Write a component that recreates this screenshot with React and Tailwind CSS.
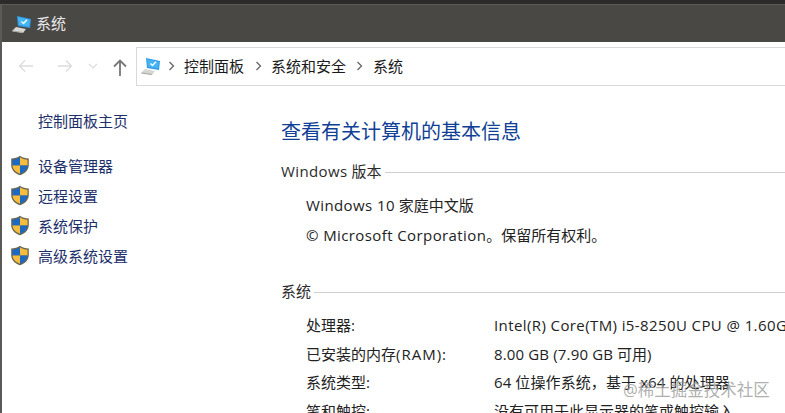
const font = "font-['Open_Sans','Noto_Sans_CJK_SC',sans-serif]";

const Shield = () => (
  <svg width="20" height="21" viewBox="0 0 20 21" className="shrink-0">
    <path d="M10 .8 C7.500 2.600 4.500 3.400 1.200 3.500 V10 C1.200 14.800 4.500 18.200 10 20.300 C15.500 18.200 18.800 14.800 18.800 10 V3.500 C15.500 3.400 12.500 2.600 10 .8 Z" fill="#6b6650" />
    <path d="M10 2.300 C7.800 3.800 5.300 4.500 2.500 4.700 V10.500 H10 Z" fill="#1c69c4" />
    <path d="M10 2.300 C12.200 3.800 14.700 4.500 17.500 4.700 V10.500 H10 Z" fill="#f6bd3d" />
    <path d="M2.500 10.500 H10 V18.800 C5.500 17 2.800 14.300 2.500 10.500 Z" fill="#f6bd3d" />
    <path d="M17.500 10.500 H10 V18.800 C14.500 17 17.200 14.300 17.500 10.500 Z" fill="#1c69c4" />
  </svg>
);

const Computer = () => (
  <svg width="20" height="18" viewBox="0 0 20 18" className="shrink-0">
    <path d="M5 1 L19 4 L18 13 L6 11 Z" fill="#2f9be8" />
    <path d="M6 2.200 L17.800 4.800 L17 11.500 L7 9.800 Z" fill="#45b4f2" />
    <path d="M9.500 6.500 L11.500 8.500 L15 4.800" fill="none" stroke="#ffffff" strokeWidth="1.300" />
    <path d="M4 12 L14 14 L11 18 L0 16 Z" fill="#d6d6d2" />
    <path d="M1 15.500 L11 17 L10.500 18 L0 16.500 Z" fill="#a9a9a5" />
  </svg>
);

const NavArrow = ({ flip, color }) => (
  <svg width="16" height="16" viewBox="0 0 16 16" className={flip ? "rotate-180" : ""}>
    <path d="M15 8 H1.500 M7 2.500 L1.500 8 L7 13.500" fill="none" stroke={color} strokeWidth="1.300" />
  </svg>
);

const UpArrow = () => (
  <svg width="14" height="17" viewBox="0 0 14 17">
    <path d="M7 17 V1.500 M1 7.500 L7 1.500 L13 7.500" fill="none" stroke="#777777" strokeWidth="1.800" />
  </svg>
);

const Chevron = () => (
  <svg width="7" height="10" viewBox="0 0 7 10" className="shrink-0">
    <path d="M1.500 1 L5.500 5 L1.500 9" fill="none" stroke="#666666" strokeWidth="1.300" />
  </svg>
);

// Latin runs are a little wider in the original UI font
const Lat = ({ children }) => <span className="tracking-[0.4px]">{children}</span>;

const SectionHead = ({ title, className }) => (
  <div className={`flex items-center gap-[3px] text-[15px] text-[#2b2b2b] leading-5 ${className}`}>
    <span>{title}</span>
    <div className="flex-1 h-px bg-[#cfcfcf] mt-0.5" />
  </div>
);

const sideLinks = ["设备管理器", "远程设置", "系统保护", "高级系统设置"];

const specs = [
  ["处理器:", <Lat>Intel(R) Core(TM) i5-8250U CPU @ 1.60GHz   1.80 GHz</Lat>, "h-[29px]"],
  [<>已安装的内存<span className="tracking-[1px]">(RAM):</span></>, <><span className="tracking-[0.15px]">8.00 GB (7.90 GB</span> 可用)</>, "h-[28px]"],
  ["系统类型:", <span className="tracking-[0.1px]">64 位操作系统，基于 x64 的处理器</span>, "h-[29px]"],
  ["笔和触控:", "没有可用于此显示器的笔或触控输入", "h-[28px]"],
];

export default function App() {
  return (
    <div className={`relative w-[785px] h-[413px] overflow-hidden bg-[#2c2b2a] pt-1 flex flex-col ${font}`}>
      <div className="flex-1 flex flex-col border-l-2 border-t border-[#5c5a57] min-h-0">
        <div className="h-[37px] bg-[#4a4845] flex items-center pl-[10px] gap-[4px] shrink-0">
          <Computer />
          <span className="text-[15px] text-[#e8e8e8]">系统</span>
        </div>

        <div className="flex-1 bg-white min-h-0 flex flex-col">
          <div className="h-[48px] flex items-center shrink-0">
            <div className="flex items-center w-[134px] pl-[16px]">
              <NavArrow color="#dcdcdc" />
              <div className="ml-[23px]"><NavArrow color="#dcdcdc" flip /></div>
              <svg width="10" height="6" viewBox="0 0 10 6" className="ml-[15px]">
                <path d="M1 1 L5 5 L9 1" fill="none" stroke="#dcdcdc" strokeWidth="1.200" />
              </svg>
              <div className="ml-[15px] mt-[3px]"><UpArrow /></div>
            </div>
            <div className="flex-1 h-[39px] border border-r-0 border-[#d9d9d9] flex items-center pl-[4px] text-[15px] text-[#1a1a1a]">
              <Computer />
              <div className="ml-[7px]"><Chevron /></div>
              <span className="ml-[9px]">控制面板</span>
              <div className="ml-[11px]"><Chevron /></div>
              <span className="ml-[9px]">系统和安全</span>
              <div className="ml-[10px]"><Chevron /></div>
              <span className="ml-[10px]">系统</span>
            </div>
          </div>

          <div className="flex-1 flex min-h-0">
            <div className="w-[279px] shrink-0 pt-[21px] text-[15px] leading-5 text-[#1c2f6b]">
              <div className="pl-[36px]">控制面板主页</div>
              <div className="mt-[24px] flex flex-col gap-[9px] pl-[8px]">
                {sideLinks.map((label) => (
                  <div key={label} className="flex items-center gap-2">
                    <Shield />
                    <span>{label}</span>
                  </div>
                ))}
              </div>
            </div>

            <div className="flex-1 min-w-0 pt-[28px]">
              <div className="text-[20px] leading-7 text-[#0f3f96]">查看有关计算机的基本信息</div>
              <SectionHead title={<><Lat>Windows</Lat> 版本</>} className="mt-[15px]" />
              <div className="pl-[25px] pt-[14px] text-[15px] leading-5 text-[#222222] flex flex-col gap-[10px]">
                <div><Lat>Windows 10</Lat> 家庭中文版</div>
                <div><Lat>© Microsoft Corporation</Lat>。保留所有权利。</div>
              </div>
              <SectionHead title="系统" className="mt-[36px]" />
              <div className="mt-[10px] pl-[25px] text-[15px] text-[#222222]">
                {specs.map(([label, value, h], i) => (
                  <div key={i} className={`flex items-center whitespace-nowrap ${h}`}>
                    <span className="w-[188px] shrink-0">{label}</span>
                    <span>{value}</span>
                  </div>
                ))}
              </div>
            </div>
          </div>
        </div>
      </div>

      <div className="absolute left-[623px] top-[379px] text-[16.500px] leading-[22px] text-[#9a9a9a]/80 whitespace-nowrap">
        @稀土掘金技术社区
      </div>
    </div>
  );
}
